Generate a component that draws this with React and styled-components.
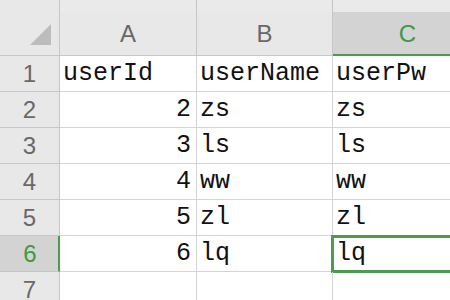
import React from 'react';
import styled, { createGlobalStyle } from 'styled-components';

const GlobalStyle = createGlobalStyle`
  html, body {
    margin: 0;
    padding: 0;
    background: #ffffff;
    overflow: hidden;
  }
`;

const columns = ['A', 'B', 'C'];
const rows = [
  ['userId', 'userName', 'userPw'],
  [2, 'zs', 'zs'],
  [3, 'ls', 'ls'],
  [4, 'ww', 'ww'],
  [5, 'zl', 'zl'],
  [6, 'lq', 'lq'],
  ['', '', ''],
];
const activeCol = 2;
const activeRow = 5;

const Sheet = styled.div`
  display: grid;
  grid-template-columns: 60px 137px 136px 150px;
  grid-auto-rows: 36px;
  grid-template-rows: 56px;
  width: 450px;
  height: 300px;
  overflow: hidden;
`;

const Corner = styled.div`
  background: #e8e8e8;
  border-right: 1px solid #c6c6c6;
  border-bottom: 1px solid #c6c6c6;
  box-sizing: border-box;
  display: flex;
  align-items: flex-start;
  padding: 24px 0 0 30px;
`;

const ColHeader = styled.div`
  background: #eaeaea;
  border-right: 1px solid #c6c6c6;
  box-sizing: border-box;
  display: flex;
  flex-direction: column;
  justify-content: flex-end;
`;

const HeaderFace = styled.div`
  height: 44px;
  box-sizing: border-box;
  background: ${p => (p.$active ? '#d3d3d3' : '#e8e8e8')};
  border-bottom: ${p => (p.$active ? '2px solid #4a9c4f' : '1px solid #c6c6c6')};
  color: ${p => (p.$active ? '#3d9a45' : '#686868')};
  font-family: 'Liberation Sans', Arial, sans-serif;
  font-size: 24px;
  display: flex;
  align-items: center;
  justify-content: center;
  padding-top: ${p => (p.$active ? '1px' : '0')};
`;

const RowHeader = styled.div`
  background: ${p => (p.$active ? '#d3d3d3' : '#e8e8e8')};
  border-right: ${p => (p.$active ? '2px solid #4a9c4f' : '1px solid #c6c6c6')};
  border-bottom: 1px solid #c6c6c6;
  box-sizing: border-box;
  color: ${p => (p.$active ? '#3d9a45' : '#686868')};
  font-family: 'Liberation Sans', Arial, sans-serif;
  font-size: 24px;
  display: flex;
  align-items: center;
  justify-content: center;
  padding-left: ${p => (p.$active ? '2px' : '0')};
`;

const Cell = styled.div`
  position: relative;
  border-right: 1px solid #d4d4d4;
  border-bottom: 1px solid #d4d4d4;
  box-sizing: border-box;
  font-family: 'Liberation Mono', 'Courier New', monospace;
  font-size: 25px;
  line-height: 25px;
  color: #111111;
  display: flex;
  align-items: flex-end;
  justify-content: ${p => (p.$right ? 'flex-end' : 'flex-start')};
  padding: 0 5px 5px 3px;
  white-space: nowrap;

  ${p => p.$selected && `
    &::after {
      content: '';
      position: absolute;
      left: -2px;
      top: -1px;
      right: -2px;
      bottom: -2px;
      border: 3px solid #4a9c4f;
    }
  `}
`;

const Triangle = () => (
  <svg width="21" height="21" viewBox="0 0 21 21">
    <polygon points="21,0 21,21 0,21" fill="#bcbcbc" />
  </svg>
);

export default function App() {
  return (
    <>
      <GlobalStyle />
      <Sheet>
        <Corner>
          <Triangle />
        </Corner>
        {columns.map((c, i) => (
          <ColHeader key={c}>
            <HeaderFace $active={i === activeCol}>{c}</HeaderFace>
          </ColHeader>
        ))}
        {rows.map((r, ri) => (
          <React.Fragment key={ri}>
            <RowHeader $active={ri === activeRow}>{ri + 1}</RowHeader>
            {r.map((v, ci) => (
              <Cell
                key={ci}
                $right={typeof v === 'number'}
                $selected={ri === activeRow && ci === activeCol}
              >
                {v}
              </Cell>
            ))}
          </React.Fragment>
        ))}
      </Sheet>
    </>
  );
}
